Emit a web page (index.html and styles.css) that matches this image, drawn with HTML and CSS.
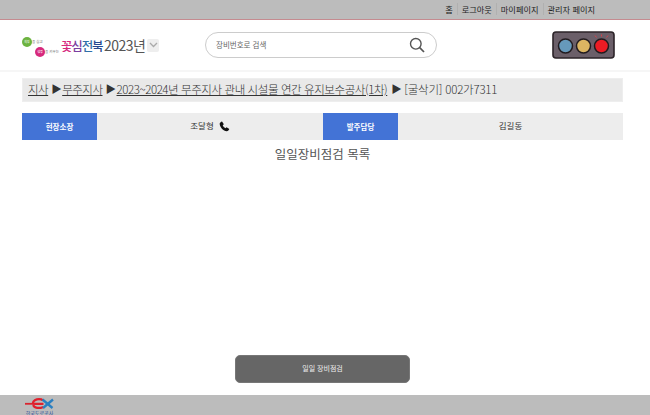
FILE: index.html
```html
<!DOCTYPE html>
<html lang="ko">
<head>
  <meta charset="UTF-8" />
  <title>일일장비점검 목록</title>
  <link rel="stylesheet" href="styles.css">
</head>
<body>
  <div class="topbar">
    <a href="#">홈</a>
    <a href="#">로그아웃</a>
    <a href="#">마이페이지</a>
    <a href="#">관리자 페이지</a>
  </div>

  <header class="header">
    <div class="logo">
      <div class="slogan">
        <span class="slogan-line"><b class="dot dot-green">희망</b>을 심고</span>
        <span class="slogan-line slogan-second"><b class="dot dot-pink">생명</b>을 키우는</span>
      </div>
      <div class="brand"><span class="c-pink">꽃</span><span class="c-purple">심</span><span class="c-green">전</span><span class="c-blue">북</span></div>
      <div class="year">2023년</div>
      <div class="year-select">
        <svg width="9" height="6" viewBox="0 0 9 6"><path d="M1 1l3.500 3.500L8 1" fill="none" stroke="#aaa" stroke-width="1.300"/></svg>
      </div>
    </div>
    <div class="search">
      <span class="search-text">장비번호로 검색</span>
      <svg class="search-icon" width="16" height="16" viewBox="0 0 16 16"><circle cx="6.800" cy="6.800" r="5.300" fill="none" stroke="#555" stroke-width="1.400"/><path d="M10.700 10.700l4.300 4.300" stroke="#555" stroke-width="1.700"/></svg>
    </div>
    <svg class="signal" width="63" height="28" viewBox="0 0 63 28">
      <rect x="1" y="1" width="61" height="26" rx="3" fill="#6b5f69" stroke="#2c2429" stroke-width="1.600"/>
      <circle cx="13.500" cy="15" r="7" fill="#6699bb" stroke="#221c20" stroke-width="1.500"/>
      <circle cx="31.500" cy="15" r="7" fill="#dcb562" stroke="#221c20" stroke-width="1.500"/>
      <circle cx="49.500" cy="15" r="7" fill="#ed1c24" stroke="#221c20" stroke-width="1.500"/>
      <path d="M49.500 3.500v2M43 4.500l1.500 2M56 4.500l-1.500 2" stroke="#d8414a" stroke-width="1"/>
    </svg>
  </header>

  <main class="content">
    <nav class="crumbs">
      <a href="#">지사</a><span class="arrow">▶</span><a href="#">무주지사</a><span class="arrow">▶</span><a class="crumb-long" href="#">2023~2024년 무주지사 관내 시설물 연간 유지보수공사(1차)</a><span class="arrow arrow-last">▶</span><span class="crumb-last">[굴삭기] 002가7311</span>
    </nav>

    <div class="people">
      <div class="person-label">현장소장</div>
      <div class="person-name"><span>조달형</span>
        <svg class="phone" width="11" height="11" viewBox="0 0 24 24"><path d="M6.600 1l4 6.100-2.500 2.400c.9 2.600 3 5 5.900 6.300l2.500-2.300 6 4.200c-.8 2.300-3 4.800-5.500 4.800C9.500 22.500 1.500 12.500 1.500 6c0-2.200 2.700-4.300 5.100-5z" fill="#111"/></svg>
      </div>
      <div class="person-label">발주담당</div>
      <div class="person-name"><span>김길동</span></div>
    </div>

    <h1 class="title">일일장비점검 목록</h1>

    <button class="action" type="button">일일 장비점검</button>
  </main>

  <footer class="footer">
    <div class="ex-logo">
      <svg width="29" height="11" viewBox="0 0 29 11">
        <path d="M0 5.800h9" stroke="#d9252f" stroke-width="1.800"/>
        <path d="M18.500 5.800H11c-2 0-3 .2-3-.8C8 3 11 1.200 14 1.200c1.700 0 3 .4 4 1.200M8.300 7c.5 1.800 2.800 3 5.700 3 1.700 0 3-.3 4.200-1" fill="none" stroke="#e0202c" stroke-width="2.300"/>
        <path d="M17.500 1.500l10 8.500" stroke="#2a7fc1" stroke-width="2.300"/>
        <path d="M28 1.500l-10 8.500" stroke="#2a7fc1" stroke-width="2.300"/>
      </svg>
      <span class="ex-name">한국도로공사</span>
    </div>
  </footer>
</body>
</html>
```

FILE: styles.css
```css
:root {
  --gray-bar: #bcbcbc;
  --soft-bg: #ededed;
  --blue: #4373d6;
  --text-color: #444;
}
* {
  box-sizing: border-box;
}
body {
  margin: 0;
  min-height: 100vh;
  display: flex;
  flex-direction: column;
  background: #fff;
  color: var(--text-color);
  font-family: "Noto Sans CJK KR", "Noto Sans", sans-serif;
  font-weight: 400;
}
a {
  color: inherit;
}

/* top links */
.topbar {
  height: 20px;
  display: flex;
  justify-content: flex-end;
  align-items: center;
  gap: 4px;
  padding: 0 55px 2px 0;
  background: var(--gray-bar);
  border-bottom: 1px solid #c58b90;
  font-size: 8.200px;
  line-height: 12px;
  color: #222;
}
.topbar a {
  text-decoration: none;
}
.topbar a + a {
  padding-left: 4px;
  border-left: 1px solid #b0b0b0;
}

/* header */
.header {
  height: 52px;
  display: flex;
  align-items: center;
  padding: 0 35px 0 22px;
  border-bottom: 2px solid #f6f6f6;
}
.logo {
  width: 183px;
  display: flex;
  align-items: center;
}
.slogan {
  width: 39px;
  margin-top: 3px;
  display: flex;
  flex-direction: column;
  font-size: 3.500px;
  line-height: 10px;
  color: #666;
}
.slogan-line {
  white-space: nowrap;
}
.slogan-second {
  padding-left: 13px;
}
.dot {
  display: inline-block;
  width: 10px;
  height: 10px;
  border-radius: 50%;
  font-size: 3px;
  font-weight: 400;
  line-height: 10px;
  text-align: center;
  color: #fff;
}
.dot-green {
  background: #6cb33f;
}
.dot-pink {
  background: #d6297d;
}
.brand {
  width: 42px;
  font-size: 12.500px;
  font-weight: 500;
  letter-spacing: -1.200px;
  white-space: nowrap;
}
.c-pink { color: #d6297d; }
.c-purple { color: #7a3fa0; }
.c-green { color: #2f6fa8; }
.c-blue { color: #26488f; }
.year {
  margin-left: 1px;
  font-size: 14px;
  letter-spacing: -0.500px;
  color: #555;
}
.year-select {
  width: 12px;
  height: 13px;
  margin-left: 2px;
  display: flex;
  align-items: center;
  justify-content: center;
  background: #eee;
  border-radius: 2px;
}
.search {
  width: 232px;
  height: 26px;
  display: flex;
  align-items: center;
  justify-content: space-between;
  padding: 0 11px 0 10px;
  border: 1px solid #ccc;
  border-radius: 13px;
}
.search-text {
  margin-bottom: 2px;
  font-size: 7.500px;
  color: #666;
}
.signal {
  margin-left: auto;
}

/* content */
.content {
  flex: 1;
  display: flex;
  flex-direction: column;
  padding: 6px 27px 12px 22px;
}
.crumbs {
  height: 24px;
  display: flex;
  align-items: center;
  padding: 0 0 3px 5px;
  background: #e9e9e9;
  border: 1px solid #eee;
  font-size: 11.500px;
  font-weight: 300;
  letter-spacing: -0.500px;
  color: #333;
  white-space: nowrap;
}
.crumb-long {
  letter-spacing: -0.420px;
}
.crumb-last {
  letter-spacing: -0.200px;
}
.arrow {
  margin: 0 1px 0 3px;
  font-size: 10.500px;
}
.arrow-last {
  margin: 0 3px 0 4px;
}
.people {
  height: 27px;
  margin-top: 11px;
  display: grid;
  grid-template-columns: 75px 226px 75px 1fr;
  background: var(--soft-bg);
  font-size: 8.500px;
}
.person-label,
.person-name {
  display: flex;
  align-items: center;
  justify-content: center;
}
.person-label {
  background: var(--blue);
  color: #fff;
  font-size: 7.500px;
  font-weight: 700;
}
.person-name {
  gap: 5px;
  color: #333;
}
.person-name span {
  margin-bottom: 3px;
}
.title {
  margin: 4px 0 0;
  font-size: 12.500px;
  line-height: 20px;
  font-weight: 400;
  text-align: center;
  color: #555;
}
.action {
  width: 175px;
  height: 28px;
  margin: auto 0 0 213px;
  padding: 0 0 2px;
  background: #666;
  border: 1px solid #777;
  border-radius: 5px;
  color: #eee;
  font-family: inherit;
  font-size: 7px;
}

/* footer */
.footer {
  height: 20px;
  padding-left: 25px;
  background: var(--gray-bar);
  overflow: hidden;
}
.ex-logo {
  width: 29px;
  display: flex;
  flex-direction: column;
  align-items: center;
  padding-top: 3px;
}
.ex-name {
  margin-top: 1px;
  font-size: 5px;
  line-height: 6px;
  color: #1f4a96;
  white-space: nowrap;
}
```
